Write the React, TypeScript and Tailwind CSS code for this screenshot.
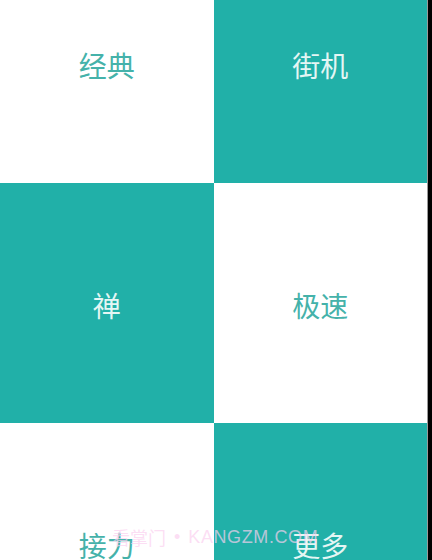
import React from "react";

const modes = [
  { label: "经典", dark: false },
  { label: "街机", dark: true },
  { label: "禅", dark: true },
  { label: "极速", dark: false },
  { label: "接力", dark: false },
  { label: "更多", dark: true },
];

const cjk = { fontFamily: '"Noto Sans CJK SC", "Noto Sans", sans-serif' };

export default function App() {
  return (
    <div className="relative flex h-[560px] w-[432px] overflow-hidden bg-black">
      <div className="w-[428px] shrink-0 border-r border-[#9a9a9a] bg-white">
        {/* list is scrolled up a little */}
        <div className="-mt-[57px] grid grid-cols-2">
          {modes.map((m) => (
            <button
              key={m.label}
              className={
                m.dark
                  ? "flex h-[240px] justify-center bg-[#21b0a8] pt-[108px] text-[#e4f6f4]"
                  : "flex h-[240px] justify-center bg-white pt-[108px] text-[#45b2aa]"
              }
            >
              <span className="text-[28px] leading-none" style={cjk}>
                {m.label}
              </span>
            </button>
          ))}
        </div>
      </div>

      {/* watermark */}
      <div
        className="pointer-events-none absolute left-[112px] top-[528px] flex items-center gap-[8px] text-[18px] leading-none text-[#fbd0ef]/70"
        style={{ fontFamily: '"Liberation Sans", "Noto Sans CJK SC", sans-serif' }}
      >
        <span style={cjk}>看掌门</span>
        <span>•</span>
        <span className="tracking-[0.6px]">KANGZM.COM</span>
      </div>
    </div>
  );
}
